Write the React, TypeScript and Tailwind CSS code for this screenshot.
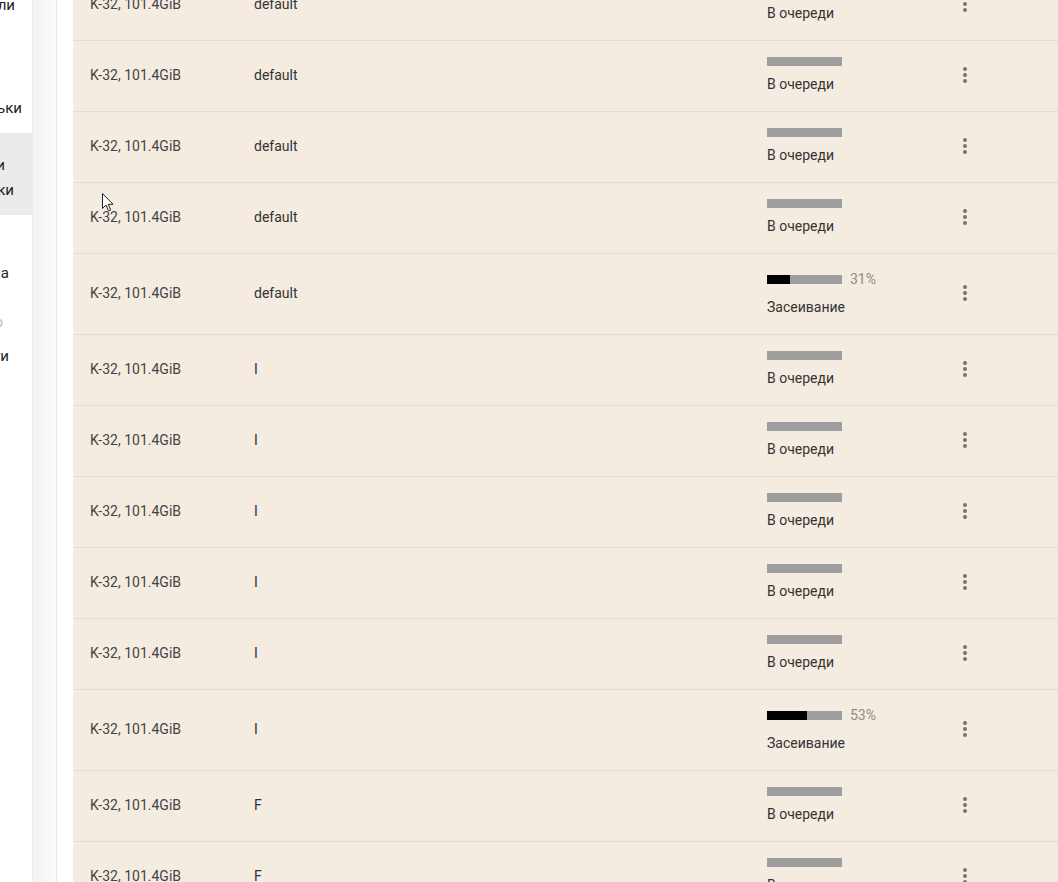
type Row = { label: string; seed?: number };

const rows: Row[] = [
	{ label: "default" },
	{ label: "default" },
	{ label: "default" },
	{ label: "default" },
	{ label: "default", seed: 31 },
	{ label: "I" },
	{ label: "I" },
	{ label: "I" },
	{ label: "I" },
	{ label: "I" },
	{ label: "I", seed: 53 },
	{ label: "F" },
	{ label: "F" },
];

const Kebab = () => (
	<svg width="24" height="24" viewBox="0 0 24 24" className="fill-[#757575]">
		<circle cx="12" cy="6" r="2" />
		<circle cx="12" cy="12" r="2" />
		<circle cx="12" cy="18" r="2" />
	</svg>
);

const SideLine = ({ text, w, muted }: { text: string; w: string; muted?: boolean }) => (
	<div className={`flex h-6 items-center justify-end whitespace-nowrap ${w} ${muted ? "text-[#bbb]" : "text-[#222]"}`}>
		{text}
	</div>
);

const Sidebar = () => (
	<div className="w-[33px] shrink-0 overflow-hidden border-r border-[#ececec] bg-white text-[15px]">
		<div className="-mt-[7px]">
			<SideLine text="Модели" w="w-[15px]" />
			<div className="h-[79px]" />
			<SideLine text="Шпильки" w="w-[22px]" />
			<div className="h-[13px]" />
			<div className="h-[82px] bg-[#ebebeb] pt-[20px]">
				<div className="flex h-[25px] w-[5px] items-center justify-end whitespace-nowrap text-[#222]">Плоты и</div>
				<div className="flex h-[25px] w-[14px] items-center justify-end whitespace-nowrap text-[#222]">Загрузки</div>
			</div>
			<div className="h-[46px]" />
			<SideLine text="Система" w="w-[9px]" />
			<div className="h-[25px]" />
			<SideLine text="Инфо" w="w-[3px]" muted />
			<div className="h-[10px]" />
			<SideLine text="Логи" w="w-[9px]" />
		</div>
	</div>
);

const Status = ({ seed }: { seed?: number }) =>
	seed === undefined ? (
		<div className="flex flex-col">
			<div className="h-[9px] w-[75px] bg-[#9e9e9e]" />
			<div className="mt-[10px] text-[14px] leading-4 text-[#333]">В очереди</div>
		</div>
	) : (
		<div className="flex flex-col">
			<div className="flex h-[18px] items-center gap-2">
				<div className="h-[9px] w-[75px] bg-[#9e9e9e]">
					<div className="h-full bg-black" style={{ width: `${seed}%` }} />
				</div>
				<span className="text-[14px] text-[#8c8c8c]">{seed}%</span>
			</div>
			<div className="mt-[11px] text-[14px] leading-4 text-[#333]">Засеивание</div>
		</div>
	);

export default function App() {
	return (
		<div className="relative flex h-[882px] w-full overflow-hidden bg-white font-['Roboto',sans-serif]">
			<Sidebar />
			<div className="w-[24px] shrink-0 border-r border-[#e8e8e8] bg-gradient-to-r from-[#f3f3f3] to-[#fafafa]" />
			<div className="w-[16px] shrink-0 bg-white" />
			<div className="flex-1 bg-[#f4ece0]">
				<div className="-mt-[30px]">
					{rows.map((r, i) => (
						<div key={i} className="flex items-center border-b border-[#e2dcd3] pt-[16px] pb-[19px]">
							<div className="w-[181px] shrink-0 pl-[17px] text-[14px] leading-4 text-[#444]">K-32, 101.4GiB</div>
							<div className="w-[513px] shrink-0 text-[14px] leading-4 text-[#333]">{r.label}</div>
							<div className="w-[186px] shrink-0">
								<Status seed={r.seed} />
							</div>
							<Kebab />
						</div>
					))}
				</div>
			</div>
			<svg className="absolute left-[102px] top-[193px]" width="12" height="19" viewBox="0 0 12 19">
				<path d="M0.5 0.5 L0.5 15.5 L4 12 L6.5 17.8 L8.6 16.9 L6.2 11.3 L11 11.3 Z" fill="white" stroke="#222" strokeWidth="1" strokeLinejoin="round" />
			</svg>
		</div>
	);
}
